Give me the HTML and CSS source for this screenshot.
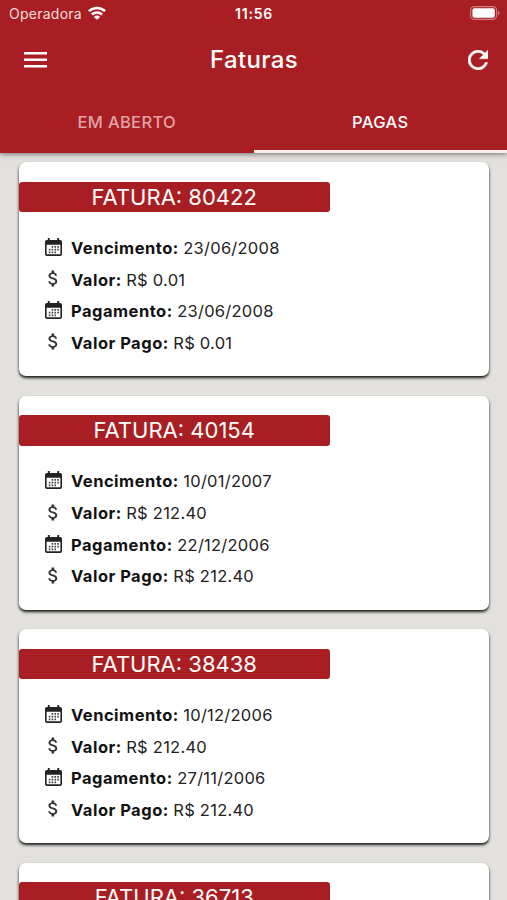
FILE: index.html
```
<!DOCTYPE html>
<html lang="pt-BR">
<head>
<meta charset="utf-8">
<title>Faturas</title>
<link rel="stylesheet" href="styles.css">
</head>
<body>
<svg width="0" height="0" class="defs">
  <symbol id="cal" viewBox="0 0 18 19">
    <path fill="#222" fill-rule="evenodd" d="M3 0h2v2h8V0h2v2h1a2 2 0 0 1 2 2v13a2 2 0 0 1-2 2H2a2 2 0 0 1-2-2V4a2 2 0 0 1 2-2h1zM1.7 7v10.3h14.6V7z"/>
    <path fill="#444" d="M7 8.5h1.7v1.7H7zm3 0h1.7v1.7H10zm3 0h1.7v1.7H13zM4 11.4h1.7v1.7H4zm3 0h1.7v1.7H7zm3 0h1.7v1.7H10zm3 0h1.7v1.7H13zM4 14.3h1.7V16H4zm3 0h1.7V16H7zm3 0h1.7V16H10z"/>
  </symbol>
  <symbol id="money" viewBox="6 3 12.5 18">
    <path fill="#333" d="M11.8 10.9c-2.27-.59-3-1.2-3-2.15 0-1.09 1.01-1.85 2.7-1.85 1.78 0 2.44.85 2.5 2.1h2.21c-.07-1.72-1.12-3.3-3.21-3.81V3h-3v2.16c-1.94.42-3.5 1.68-3.5 3.61 0 2.31 1.91 3.46 4.7 4.13 2.5.6 3 1.48 3 2.41 0 .69-.49 1.79-2.7 1.79-2.06 0-2.87-.92-2.98-2.1h-2.2c.12 2.19 1.76 3.42 3.68 3.83V21h3v-2.15c1.95-.37 3.5-1.5 3.5-3.55 0-2.84-2.43-3.81-4.7-4.4z"/>
  </symbol>
</svg>
<header class="header">
  <div class="status">
    <div class="carrier"><span>Operadora</span>
      <svg class="wifi" viewBox="0 0 18 14"><path fill="none" stroke="#fff" stroke-width="2.5" d="M.9 5.2a11.6 11.6 0 0 1 16.2 0M3.9 8.5a7.3 7.3 0 0 1 10.2 0"/><path fill="#fff" d="M9 13.8 5.9 10.9a4.4 4.4 0 0 1 6.2 0z"/></svg>
    </div>
    <div class="time">11:56</div>
    <svg class="battery" viewBox="0 0 30 14"><rect x=".6" y=".6" width="26" height="12.8" rx="3.6" fill="none" stroke="#d07f82" stroke-width="1.1"/><rect x="2.4" y="2.3" width="22.4" height="9.4" rx="2" fill="#fff"/><path d="M28 4.8q1.6.7 1.6 2.2T28 9.2z" fill="#d07f82"/></svg>
  </div>
  <div class="bar">
    <svg class="menu" viewBox="0 0 23 16"><path fill="#fff" d="M0 0h23v2.6H0zM0 6.5h23v2.6H0zM0 13h23v2.6H0z"/></svg>
    <h1 class="title">Faturas</h1>
    <svg class="refresh" viewBox="4 4 16 16"><path fill="#fff" stroke="#fff" stroke-width=".3" d="M17.65 6.35A7.958 7.958 0 0 0 12 4a8 8 0 1 0 7.73 10h-2.08A6 6 0 1 1 12 6c1.66 0 3.14.69 4.22 1.78L13 11h7V4z"/></svg>
  </div>
  <nav class="tabs"><div class="tab">EM ABERTO</div><div class="tab active">PAGAS</div></nav>
</header>
<main class="list">
  <section class="card">
    <h2 class="ribbon">FATURA: 80422</h2>
    <div class="row"><svg class="cal"><use href="#cal"/></svg><b>Vencimento:</b><span>23/06/2008</span></div>
    <div class="row"><svg class="money"><use href="#money"/></svg><b>Valor:</b><span>R$ 0.01</span></div>
    <div class="row"><svg class="cal"><use href="#cal"/></svg><b>Pagamento:</b><span>23/06/2008</span></div>
    <div class="row"><svg class="money"><use href="#money"/></svg><b>Valor Pago:</b><span>R$ 0.01</span></div>
  </section>
  <section class="card">
    <h2 class="ribbon">FATURA: 40154</h2>
    <div class="row"><svg class="cal"><use href="#cal"/></svg><b>Vencimento:</b><span>10/01/2007</span></div>
    <div class="row"><svg class="money"><use href="#money"/></svg><b>Valor:</b><span>R$ 212.40</span></div>
    <div class="row"><svg class="cal"><use href="#cal"/></svg><b>Pagamento:</b><span>22/12/2006</span></div>
    <div class="row"><svg class="money"><use href="#money"/></svg><b>Valor Pago:</b><span>R$ 212.40</span></div>
  </section>
  <section class="card">
    <h2 class="ribbon">FATURA: 38438</h2>
    <div class="row"><svg class="cal"><use href="#cal"/></svg><b>Vencimento:</b><span>10/12/2006</span></div>
    <div class="row"><svg class="money"><use href="#money"/></svg><b>Valor:</b><span>R$ 212.40</span></div>
    <div class="row"><svg class="cal"><use href="#cal"/></svg><b>Pagamento:</b><span>27/11/2006</span></div>
    <div class="row"><svg class="money"><use href="#money"/></svg><b>Valor Pago:</b><span>R$ 212.40</span></div>
  </section>
  <section class="card">
    <h2 class="ribbon">FATURA: 36713</h2>
  </section>
</main>
</body>
</html>
```
FILE: styles.css
```
* { box-sizing: border-box; }
html, body { height: 900px; overflow: hidden; }
body {
  margin: 0;
  display: flex;
  flex-direction: column;
  background: #e2e1dd;
  font-family: Inter, "Liberation Sans", sans-serif;
  color: #222;
}
.defs { position: absolute; }
svg { display: block; flex: none; }
.header {
  flex: none;
  height: 152.5px;
  background: #a91e22;
  color: #fff;
  box-shadow: 0 1px 5px rgba(0, 0, 0, .5);
  z-index: 1;
}
.status {
  height: 27px;
  padding: 0 7px 0 9px;
  display: grid;
  grid-template-columns: 1fr auto 1fr;
  align-items: center;
}
.carrier { display: flex; align-items: center; gap: 6px; font-size: 14px; letter-spacing: .25px; color: #f6dcdc; }
.wifi { width: 18px; height: 14px; margin-top: -1px; }
.time { font-size: 14px; font-weight: 600; letter-spacing: .8px; margin-right: 1px; }
.battery { width: 30px; height: 14px; justify-self: end; margin-top: -1px; }
.bar {
  height: 64px;
  padding: 0 19px 0 24px;
  display: grid;
  grid-template-columns: 1fr auto 1fr;
  align-items: center;
}
.menu { width: 23px; height: 16px; margin-top: 1px; }
.title { margin: 0 4px 0 0; font-size: 24px; font-weight: 500; letter-spacing: .35px; }
.refresh { width: 20px; height: 20px; justify-self: end; margin-top: 1px; }
.tabs { display: flex; height: 61.5px; }
.tab {
  flex: 1;
  padding-top: 3px;
  display: flex;
  align-items: center;
  justify-content: center;
  font-size: 16.5px;
  font-weight: 500;
  letter-spacing: .35px;
  color: #e2a3a5;
  border-bottom: 3px solid transparent;
}
.tab.active { color: #fff; border-color: #f8efef; }
.list {
  padding: 9.5px 18px 0 19px;
  display: flex;
  flex-direction: column;
  gap: 19.5px;
}
.card {
  flex: none;
  height: 214px;
  padding-top: 19.5px;
  background: #fff;
  border-radius: 7px;
  box-shadow: 0 2px 3px rgba(0, 0, 0, .9);
}
.ribbon {
  width: 310.5px;
  height: 30.5px;
  margin: 0 0 20px;
  background: #a91e22;
  color: #fff;
  border-radius: 3px;
  font-size: 22px;
  line-height: 31px;
  font-weight: 400;
  text-align: center;
}
.row { display: flex; align-items: center; height: 31.7px; padding-left: 26px; font-size: 16.5px; }
.row b { font-weight: 700; letter-spacing: .5px; margin-right: 4.5px; color: #111; }
.row span { letter-spacing: .25px; }
.cal { width: 17px; height: 18px; margin-right: 9px; margin-top: -2px; }
.money { width: 11px; height: 17px; margin: -2px 12px 0 3px; }
```
